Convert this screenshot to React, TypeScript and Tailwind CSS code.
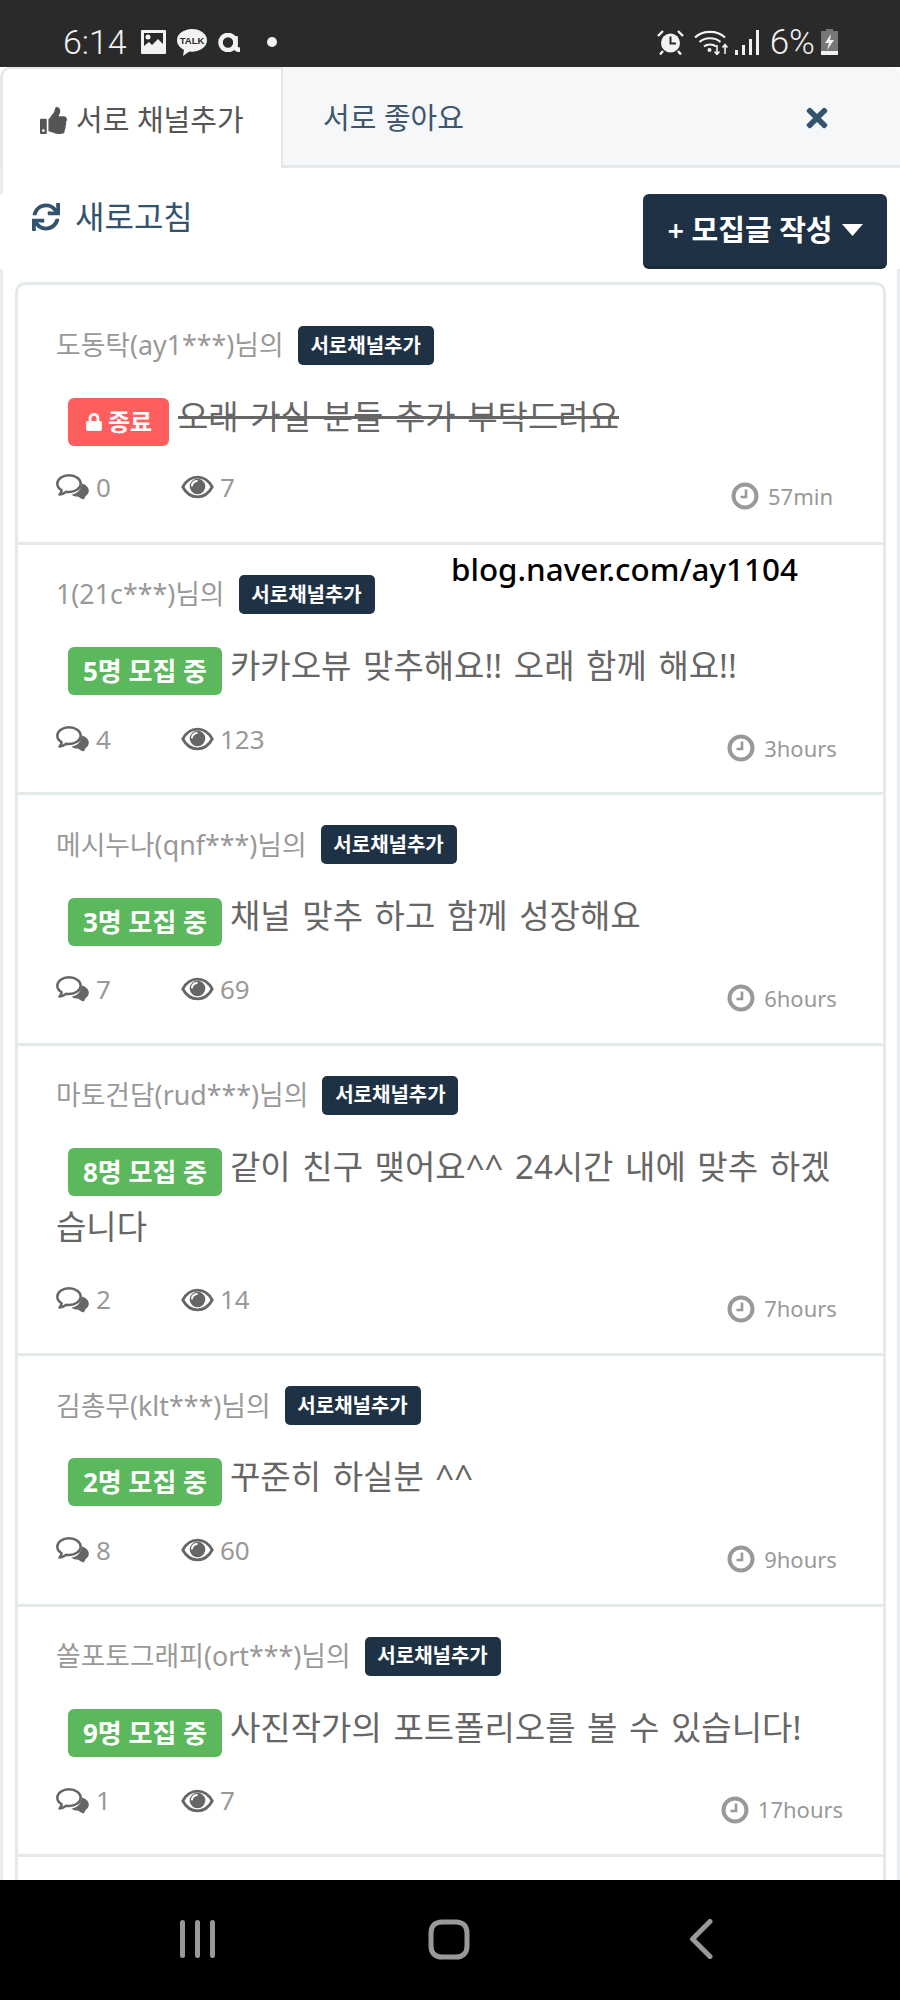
import React from "react";
import { FaThumbsUp, FaSync, FaTimes, FaLock } from "react-icons/fa";

const font = { fontFamily: '"Noto Sans","Noto Sans CJK KR",sans-serif' };

type Row = { author: string; status: string; closed?: boolean; title: string; comments: number; views: number; time: string };
const rows: Row[] = [
  { author: "도동탁(ay1***)님의", status: "종료", closed: true, title: "오래 가실 분들 추가 부탁드려요", comments: 0, views: 7, time: "57min" },
  { author: "1(21c***)님의", status: "5명 모집 중", title: "카카오뷰 맞추해요!! 오래 함께 해요!!", comments: 4, views: 123, time: "3hours" },
  { author: "메시누나(qnf***)님의", status: "3명 모집 중", title: "채널 맞추 하고 함께 성장해요", comments: 7, views: 69, time: "6hours" },
  { author: "마토건담(rud***)님의", status: "8명 모집 중", title: "같이 친구 맺어요^^ 24시간 내에 맞추 하겠습니다", comments: 2, views: 14, time: "7hours" },
  { author: "김총무(klt***)님의", status: "2명 모집 중", title: "꾸준히 하실분 ^^", comments: 8, views: 60, time: "9hours" },
  { author: "쏠포토그래피(ort***)님의", status: "9명 모집 중", title: "사진작가의 포트폴리오를 볼 수 있습니다!", comments: 1, views: 7, time: "17hours" },
];

function CommentsIcon() {
  return (
    <svg width="33" height="26" viewBox="0 0 33 26" className="shrink-0">
      <path d="M27.500 25.500c-1.500-.3-3.500-1.300-5-2.700-3 0-5.500-.8-7-2 4-1 9-3 10.500-11.300 3.500 1 6.800 3.700 6.800 7 0 2.500-1.300 4.300-3.300 5.500-.2 1.200-1 2.600-2 3.500z" fill="#666" />
      <path d="M13 1.300C6.500 1.300 1.300 5 1.300 9.700c0 2.800 1.900 5 4.400 6.500-.3 1.500-1 3-2.200 4.300 2.600-.2 5-1.300 6.800-2.700 1 .2 1.700.2 2.700.2 6.500 0 11.700-3.700 11.700-8.300S19.500 1.300 13 1.300z" fill="#fff" stroke="#666" strokeWidth="2.500" strokeLinejoin="round" />
    </svg>
  );
}

function EyeIcon() {
  return (
    <svg width="33" height="24" viewBox="0 0 33 24" className="shrink-0">
      <path d="M1.800 12C5 6 10.500 2.200 16.500 2.200S28 6 31.200 12C28 18 22.500 21.800 16.500 21.800S5 18 1.800 12z" fill="#fff" stroke="#666" strokeWidth="2.800" />
      <circle cx="16.500" cy="11.500" r="7.800" fill="#666" />
      <path d="M11 10.500c.3-2.600 2.200-4.300 4.800-4.600" stroke="#fff" strokeWidth="2" fill="none" strokeLinecap="round" />
    </svg>
  );
}

function ClockIcon() {
  return (
    <svg width="28" height="28" viewBox="0 0 28 28" className="shrink-0">
      <circle cx="14" cy="14" r="11.500" fill="none" stroke="#999" strokeWidth="4" />
      <path d="M15 7.500V15H9.500" fill="none" stroke="#999" strokeWidth="2.600" />
    </svg>
  );
}

function StatusBar() {
  return (
    <div className="h-[67px] shrink-0 bg-[#2a2a2a] flex items-center pl-[63px] pr-[62px] pt-[17px] text-[#f2f2f2]">
      <span className="text-[34px] leading-none w-[78px]" style={{ fontFamily: "Roboto,sans-serif", fontWeight: 300 }}>6:14</span>
      <svg width="25" height="24" viewBox="0 0 25 24" className="shrink-0">
        <path fillRule="evenodd" d="M1 0h23a1 1 0 011 1v22a1 1 0 01-1 1H1a1 1 0 01-1-1V1a1 1 0 011-1zm2 3v13l5-4 3 3 6-6 5 5V3z" fill="#f2f2f2" />
        <circle cx="7" cy="7" r="2.500" fill="#f2f2f2" />
      </svg>
      <svg width="30" height="27" viewBox="0 0 30 27" className="shrink-0 ml-[11px]">
        <path d="M15 0C6.700 0 0 5 0 11.200c0 4 2.800 7.500 7 9.500L6 27l6.300-4.500c.9.100 1.800.2 2.700.2 8.300 0 15-5.200 15-11.500S23.300 0 15 0z" fill="#f2f2f2" />
        <text x="15" y="15" textAnchor="middle" fontSize="9.500" fontWeight="700" fill="#2a2a2a" fontFamily="Liberation Sans,sans-serif">TALK</text>
      </svg>
      <svg width="24" height="19" viewBox="0 0 24 19" className="shrink-0 ml-[11px]">
        <circle cx="10" cy="9.500" r="7.500" fill="none" stroke="#f2f2f2" strokeWidth="4.600" />
        <path d="M17.500 3v10.500c0 2.200 1.500 3.300 4.500 3.300" fill="none" stroke="#f2f2f2" strokeWidth="4.600" />
      </svg>
      <span className="w-[10px] h-[10px] rounded-full bg-[#f2f2f2] ml-[25px]" />
      <span className="flex-1" />
      <svg width="27" height="25" viewBox="0 0 27 25" className="shrink-0">
        <circle cx="13.500" cy="13" r="9.500" fill="#f2f2f2" />
        <path d="M13.500 6.500V13.500H19" stroke="#2a2a2a" strokeWidth="2" fill="none" />
        <path d="M1 6l5-5M26 6l-5-5M6 21l-3 3.500M21 21l3 3.500" stroke="#f2f2f2" strokeWidth="2.400" />
      </svg>
      <svg width="36" height="26" viewBox="0 0 36 26" className="shrink-0 ml-[10px]">
        <path d="M1 8.500C9 1 23 1 31 8.500M5.500 13c5.500-5 15.500-5 21 0M10 17.500c3-2.700 9-2.700 12 0" fill="none" stroke="#f2f2f2" strokeWidth="2.200" />
        <circle cx="15.500" cy="21" r="2" fill="#f2f2f2" />
        <path d="M23 16v9M20.500 22.500l2.500 3 2.500-3M31 25v-9M28.500 18.500l2.500-3 2.500 3" fill="none" stroke="#f2f2f2" strokeWidth="1.600" />
      </svg>
      <svg width="24" height="25" viewBox="0 0 24 25" className="shrink-0 ml-[5px]">
        <rect x="0" y="20" width="3" height="5" fill="#f2f2f2" />
        <rect x="7" y="15" width="3" height="10" fill="#f2f2f2" />
        <rect x="14" y="9" width="3" height="16" fill="#f2f2f2" />
        <rect x="21" y="0" width="3" height="25" fill="#f2f2f2" />
      </svg>
      <span className="text-[35px] leading-none ml-[11px]" style={{ fontFamily: "Roboto,sans-serif", fontWeight: 300 }}>6%</span>
      <svg width="17" height="26" viewBox="0 0 17 26" className="shrink-0 ml-[6px]">
        <path d="M5 0h7v2h5v24H0V2h5z" fill="#777" />
        <rect x="0" y="22" width="17" height="4" fill="#f2f2f2" />
        <path d="M10 5L4 14h4l-2 7 7-10H9z" fill="#f2f2f2" />
      </svg>
    </div>
  );
}

function Tabs() {
  return (
    <div className="h-[101px] flex shrink-0 text-[29px]">
      <div className="w-[283px] flex items-center pl-[37px] pt-[3px] gap-[9px] text-[#555] bg-white border-l-[3px] border-t-[2px] border-r-[2px] border-[#e4e8ea] rounded-tl-[10px]">
        <FaThumbsUp className="text-[27px] shrink-0 text-[#555]" />
        <span>서로 채널추가</span>
      </div>
      <div className="flex-1 flex items-center justify-between bg-[#f5f7f9] border-b-[3px] border-[#e4e8ea] rounded-tr-[10px] pl-[40px] pr-[68px] pt-[4px] text-[#3e566e]">
        <span>서로 좋아요</span>
        <FaTimes className="text-[30px] text-[#34536f]" />
      </div>
    </div>
  );
}

function Toolbar() {
  return (
    <div className="shrink-0">
      <div className="h-[26px] border-l-[3px] border-[#e9edf0]" />
      <div className="flex justify-between items-start pl-[32px] pr-[13px]">
        <div className="flex items-center gap-[15px] text-[32px] text-[#34536f] h-[46px]">
          <FaSync className="text-[28px] shrink-0" />
          <span>새로고침</span>
        </div>
        <div className="w-[244px] h-[75px] bg-[#1f3245] border-b-[3px] border-[#18293a] rounded-[6px] flex items-center justify-center gap-[9px] text-white text-[29px] font-semibold">
          <span>+ 모집글 작성</span>
          <svg width="21" height="12" viewBox="0 0 21 12"><path d="M0 0h21L10.500 12z" fill="#fff" /></svg>
        </div>
      </div>
    </div>
  );
}

function ListRow({ row, first }: { row: Row; first: boolean }) {
  return (
    <div className={`border-b-[3px] border-[#e4e9eb] px-[38px] ${first ? "pt-[41px] pb-[35px]" : "pt-[30px] pb-[33.4px]"}`}>
      <div className="flex items-center h-[39px] text-[26.8px] text-[#999]">
        <span>{row.author}</span>
        <span className="ml-[14px] h-[39px] w-[136px] justify-center flex items-center bg-[#1f3245] rounded-[5px] text-white text-[20px] font-semibold whitespace-nowrap">서로채널추가</span>
      </div>
      <div className="mt-[22px] text-[33px] leading-[60px] text-[#666]" style={{ wordSpacing: "3px" }}>
        <span className={`inline-flex items-center justify-center align-middle h-[48px] ml-[12px] rounded-[6px] text-white font-bold relative top-[2px] ${row.closed ? "bg-[#ff5e5e] w-[101px] gap-[5px] text-[24px] mr-[9px]" : "bg-[#5cb85c] w-[154px] text-[26px] mr-[8px]"}`} style={{ wordSpacing: 0 }}>
          {row.closed && <FaLock className="text-[18px]" />}
          {row.status}
        </span>
        <span className={row.closed ? "line-through" : ""}>{row.title}</span>
      </div>
      <div className={`${first ? "mt-[20px]" : "mt-[23px]"} h-[40px] flex items-center text-[26px] text-[#999]`}>
        <div className="w-[125px] flex items-center gap-[7px]"><CommentsIcon /><span>{row.comments}</span></div>
        <div className="flex items-center gap-[6px]"><EyeIcon /><span>{row.views}</span></div>
        <div className="ml-auto w-[204px] -mr-[39px] flex items-center justify-center gap-[9px] text-[22px] relative top-[9px]"><ClockIcon /><span>{row.time}</span></div>
      </div>
    </div>
  );
}

function NavBar() {
  return (
    <div className="h-[120px] shrink-0 bg-black flex items-center justify-center pb-[2px]">
      <div className="w-[252px] flex justify-center -ml-[2px]">
        <div className="flex gap-[10px]">
          <span className="w-[5px] h-[38px] rounded-full bg-[#999]" />
          <span className="w-[5px] h-[38px] rounded-full bg-[#999]" />
          <span className="w-[5px] h-[38px] rounded-full bg-[#999]" />
        </div>
      </div>
      <div className="w-[252px] flex justify-center">
        <svg width="42" height="41" viewBox="0 0 42 41"><path d="M14 3h14c7 0 11 4 11 11v13c0 7-4 11-11 11H14C7 38 3 34 3 27V14C3 7 7 3 14 3z" fill="none" stroke="#999" strokeWidth="5" /></svg>
      </div>
      <div className="w-[252px] flex justify-center">
        <svg width="24" height="40" viewBox="0 0 24 40"><path d="M21 2.500L3.500 20 21 37.500" fill="none" stroke="#999" strokeWidth="5" strokeLinecap="round" strokeLinejoin="round" /></svg>
      </div>
    </div>
  );
}

export default function App() {
  return (
    <div className="w-[900px] h-[2000px] flex flex-col overflow-hidden bg-white" style={font}>
      <StatusBar />
      <div className="relative flex-1 flex flex-col overflow-hidden min-h-0">
        <Tabs />
        <Toolbar />
        <div className="flex-1 min-h-0 overflow-hidden border-x-[3px] border-[#e9edf0] pt-[13px] pl-[12px] pr-[11px]">
          <div className="border-[3px] border-b-0 border-[#e4e9eb] rounded-t-[10px]">
            {rows.map((r, i) => <ListRow key={i} row={r} first={i === 0} />)}
            <div className="h-[40px]" />
          </div>
        </div>
        <span className="absolute left-[451px] top-[481px] text-[31.4px] font-medium text-black leading-[42px]">blog.naver.com/ay1104</span>
      </div>
      <NavBar />
    </div>
  );
}
